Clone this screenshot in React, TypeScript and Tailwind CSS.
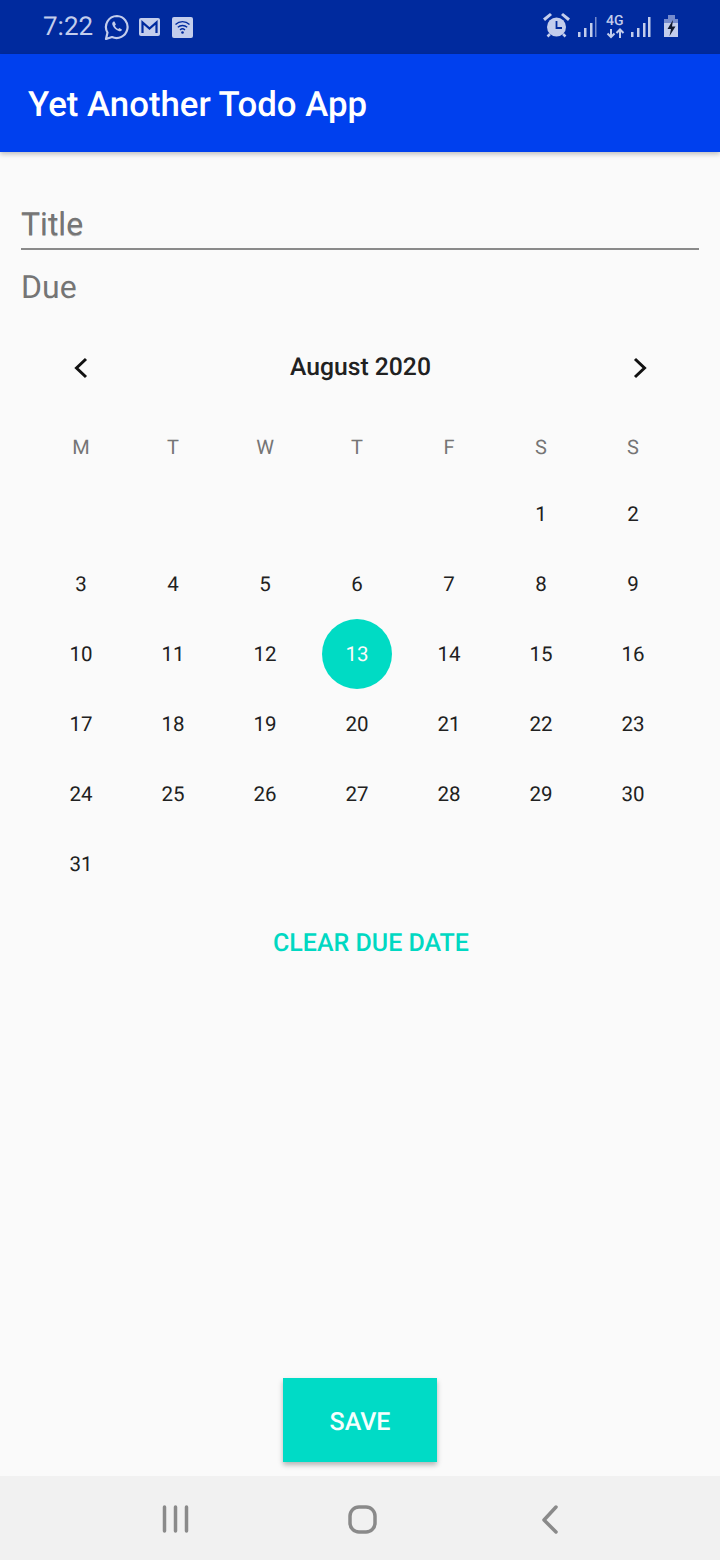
import React from 'react';

const weeks: (number | null)[][] = [
  [null, null, null, null, null, 1, 2],
  [3, 4, 5, 6, 7, 8, 9],
  [10, 11, 12, 13, 14, 15, 16],
  [17, 18, 19, 20, 21, 22, 23],
  [24, 25, 26, 27, 28, 29, 30],
  [31, null, null, null, null, null, null],
];

const weekdays = ['M', 'T', 'W', 'T', 'F', 'S', 'S'];

function StatusBar() {
  return (
    <div className="h-[54px] bg-[#002a9e] flex items-center text-[#c3cdec] relative">
      <span className="ml-[43px] text-[26px] leading-none w-[51px]">7:22</span>
      <svg className="ml-[10px]" width="26" height="27" viewBox="0 0 26 27" fill="none">
        <path d="M13 2a11 11 0 0 0-9.500 16.600L2 25l6-2a11 11 0 1 0 5-21Z" stroke="currentColor" strokeWidth="2.200" strokeLinejoin="round" />
        <path d="M9.500 7.500c-1.200.7-1.600 2-1 3.600 1 2.700 3.400 5 6.200 6 1.500.5 2.700 0 3.400-1.300l-2.600-1.800-1.300 1c-1.500-.7-2.600-1.900-3.300-3.300l1-1.300-1.400-2.900Z" fill="currentColor" />
      </svg>
      <svg className="ml-[9px]" width="21" height="18" viewBox="0 0 21 18">
        <rect width="21" height="18" rx="2" fill="currentColor" />
        <path d="M3.500 15V4.500L10.500 10.500L17.500 4.500V15" fill="none" stroke="#002a9e" strokeWidth="2.200" />
      </svg>
      <svg className="ml-[12px]" width="21" height="21" viewBox="0 0 21 21">
        <rect width="21" height="21" rx="2" fill="currentColor" />
        <path d="M3.500 7.500a10 10 0 0 1 14 0M5.800 10.300a7 7 0 0 1 9.400 0M8 13a3.600 3.600 0 0 1 5 0" fill="none" stroke="#002a9e" strokeWidth="1.300" />
        <circle cx="10.500" cy="15.500" r="1.300" fill="#002a9e" />
      </svg>
      <div className="absolute right-0 top-0 h-full">
        <svg width="200" height="54" viewBox="0 0 200 54" fill="currentColor">
          <circle cx="36.500" cy="27" r="9.500" />
          <path d="M25 21l7-6-2-2-7 5.500ZM48 21l-7-6 2-2 7 5.500Z" />
          <path d="M30 34l-2.500 2.500M43 34l2.500 2.500" stroke="currentColor" strokeWidth="2.500" />
          <path d="M36.500 21V28H42" fill="none" stroke="#002a9e" strokeWidth="1.800" />
          <rect x="58" y="32" width="2.500" height="5" />
          <rect x="64" y="28" width="2.500" height="9" />
          <rect x="70" y="23" width="2.500" height="14" />
          <rect x="75" y="17" width="1.500" height="20" opacity="0.6" />
          <rect x="111" y="32" width="2.500" height="5" />
          <rect x="117" y="28" width="2.500" height="9" />
          <rect x="123" y="23" width="2.500" height="14" />
          <rect x="128" y="17" width="2.500" height="20" />
          <path d="M91 29v8M87.500 33.500l3.500 3.500 3.500-3.500M100 38v-8M96.500 33l3.500-3.500 3.500 3.500" fill="none" stroke="currentColor" strokeWidth="2" />
          <rect x="148" y="15" width="7" height="4" opacity="0.6" />
          <rect x="144" y="19" width="14" height="4" opacity="0.6" />
          <rect x="144" y="23" width="14" height="14" />
          <path d="M153 20l-5.500 9h3.500l-1.500 7 6-9.500h-3.500Z" fill="#10182e" />
        </svg>
        <span className="absolute left-[86px] top-[14px] text-[14px] leading-[14px] font-medium">4G</span>
      </div>
    </div>
  );
}

function Calendar() {
  return (
    <div className="pl-[35px] pr-[41px]">
      <div className="h-[70px] flex items-center justify-between pl-[34px] pr-[33px] mr-[-6px]">
        <svg width="24" height="24" viewBox="0 0 24 24" fill="none" stroke="#111" strokeWidth="3">
          <path d="M17 3 7.500 12l9.500 9" />
        </svg>
        <span className="text-[24.700px] font-medium text-[#212121]">August 2020</span>
        <svg width="24" height="24" viewBox="0 0 24 24" fill="none" stroke="#111" strokeWidth="3">
          <path d="M7 3l9.500 9L7 21" />
        </svg>
      </div>
      <div className="grid grid-cols-7 h-[64px] items-center mt-[12px]">
        {weekdays.map((d, i) => (
          <span key={i} className="text-center text-[20px] text-[#757575]">{d}</span>
        ))}
      </div>
      {weeks.map((week, i) => (
        <div key={i} className="grid grid-cols-7 h-[70px] items-center">
          {week.map((d, j) => (
            <div key={j} className="flex justify-center">
              {d === 13 ? (
                <span className="w-[70px] h-[70px] pt-[2px] rounded-full bg-[#00dbc4] text-[#fafafa] text-[20.500px] flex items-center justify-center">{d}</span>
              ) : (
                <span className="pt-[2px] text-[20.500px] text-[#212121]">{d}</span>
              )}
            </div>
          ))}
        </div>
      ))}
    </div>
  );
}

export default function App() {
  return (
    <div className="w-[720px] h-[1560px] bg-[#fafafa] flex flex-col overflow-hidden font-['Roboto',sans-serif] [text-rendering:geometricPrecision]">
      <StatusBar />
      <div className="h-[98px] bg-[#0040ee] flex items-center pt-[4px] px-[28px] shadow-[0_2px_5px_rgba(0,0,0,0.25)] relative">
        <span className="text-[34.800px] font-medium text-white">Yet Another Todo App</span>
      </div>
      <div className="flex-1 flex flex-col">
        <div className="mx-[21px] mt-[49px] h-[49px] border-b-2 border-[#8a8a8a] text-[32px] leading-[47px] text-[#757575] [text-shadow:0_0.5px_0.5px_rgba(0,0,0,0.3)]">Title</div>
        <div className="mx-[21px] mt-[16px] h-[43px] text-[32px] leading-[42px] text-[#757575]">Due</div>
        <div className="mt-[24px]">
          <Calendar />
        </div>
        <div className="mt-[20px] pl-[22px] h-[50px] flex items-center justify-center text-[25px] font-medium text-[#00d8c2]">CLEAR DUE DATE</div>
        <div className="flex-1 flex items-end justify-center pb-[14px]">
          <div className="w-[154px] h-[84px] pt-[6px] bg-[#00dbc6] text-[#f6fffe] text-[25px] font-medium flex items-center justify-center shadow-[0_3px_5px_rgba(0,0,0,0.28)]">SAVE</div>
        </div>
      </div>
      <div className="h-[84px] bg-[#f1f1f1] relative">
        <svg width="720" height="84" viewBox="0 0 720 84" fill="none" stroke="#8a8a8a" strokeLinecap="round">
          <path d="M164.500 31v24M175.500 31v24M186.500 31v24" strokeWidth="3.500" />
          <rect x="350" y="31" width="25" height="25" rx="9" strokeWidth="3.500" />
          <path d="M556 31 544 44l12 12" strokeWidth="3.500" strokeLinejoin="round" />
        </svg>
      </div>
    </div>
  );
}
